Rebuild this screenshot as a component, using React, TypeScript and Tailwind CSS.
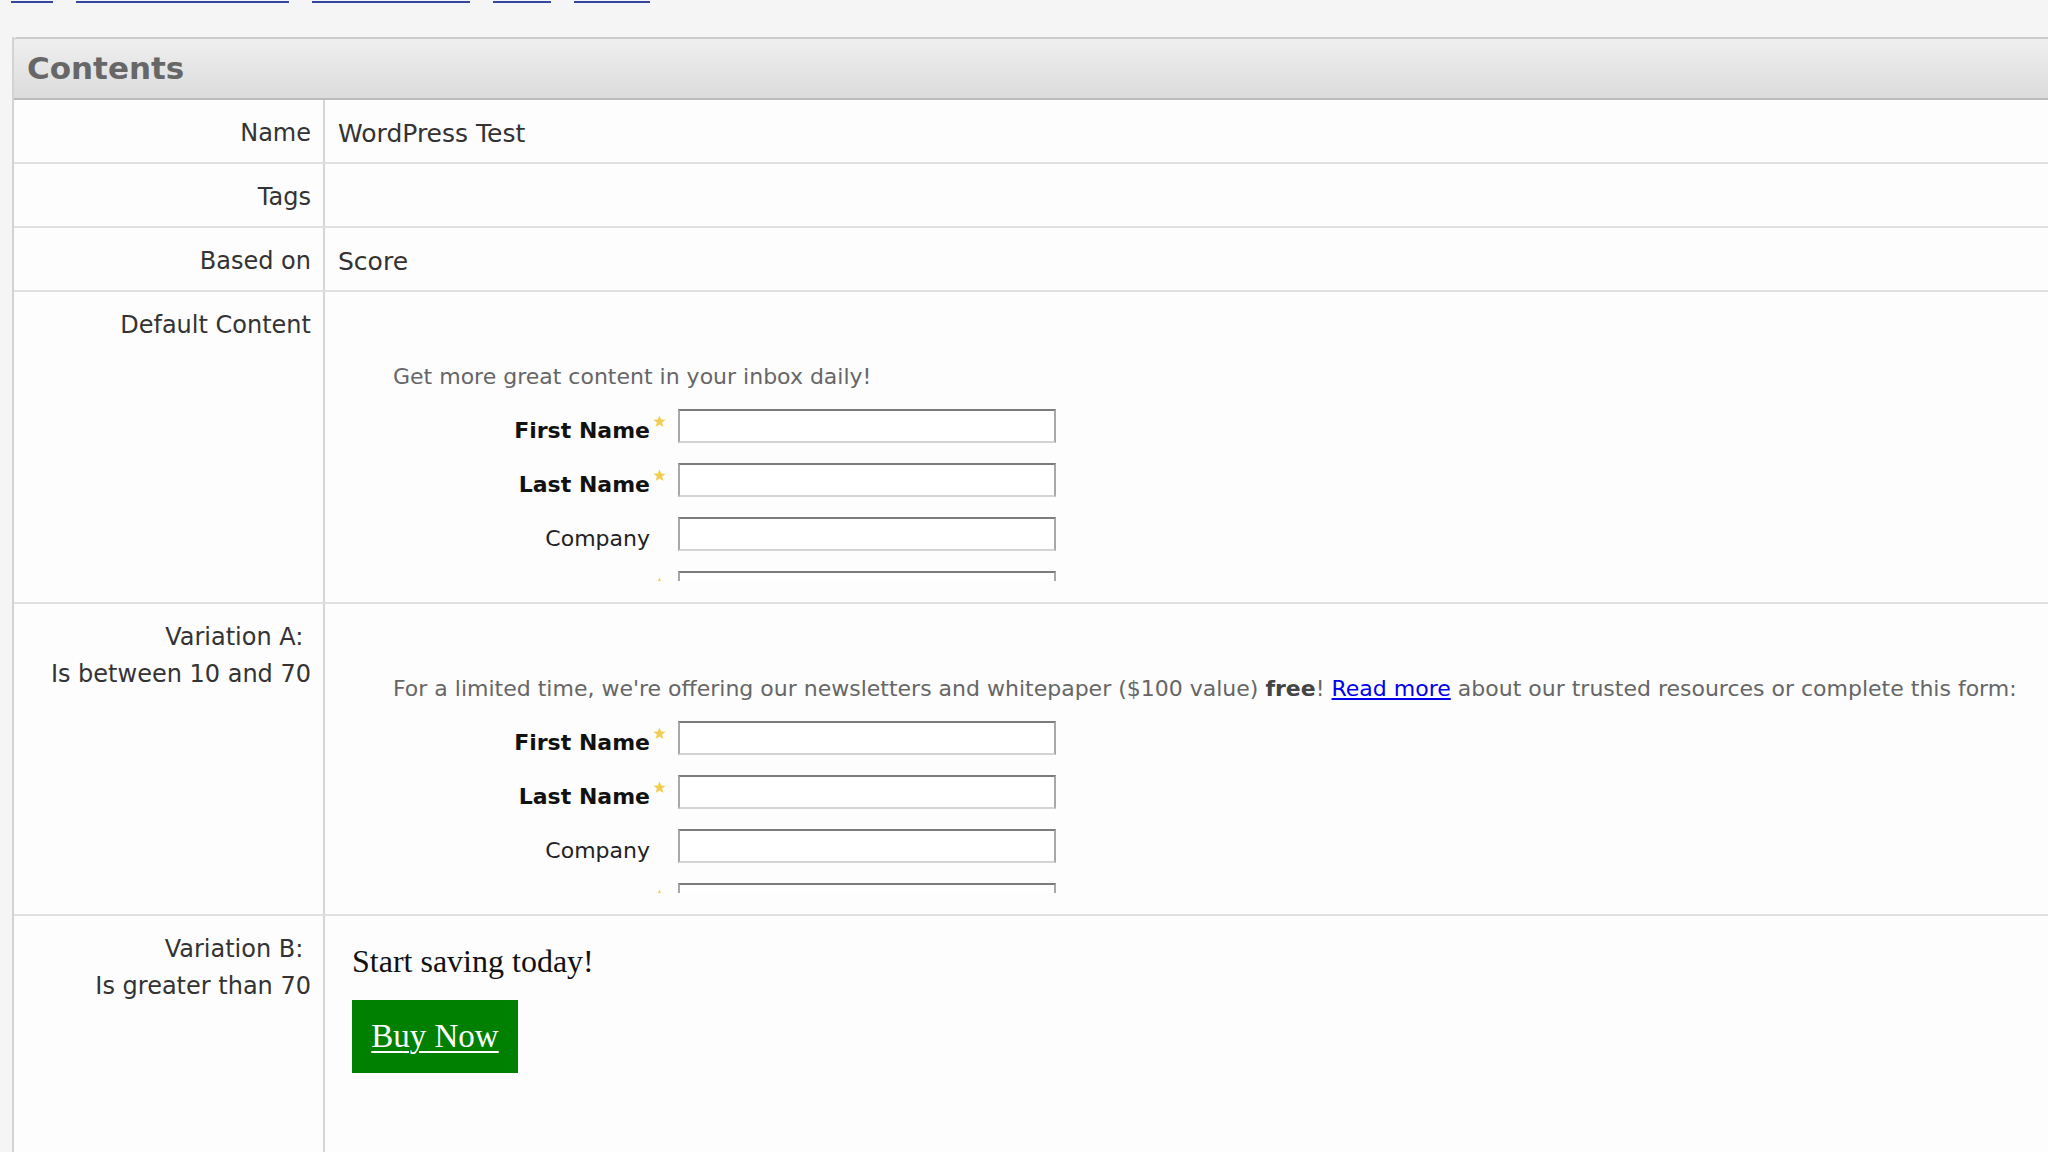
import React from 'react';

const ui = "font-['DejaVu_Sans','Verdana',sans-serif]";
const serif = "font-['Liberation_Serif','Times_New_Roman',serif]";

const topLinks = [
  { text: 'Edit', w: 'w-[42px]' },
  { text: 'Edit Configuration', w: 'w-[213px]' },
  { text: 'Change Type', w: 'w-[158px]' },
  { text: 'Copy', w: 'w-[58px]' },
  { text: 'Delete', w: 'w-[76px]' },
];

function Star() {
  return (
    <svg width="13" height="13" viewBox="0 0 10 10" className="block">
      <path d="M5 0.3 L6.3 3.5 L9.7 3.6 L7 5.8 L8 9.3 L5 7.3 L2 9.3 L3 5.8 L0.3 3.6 L3.7 3.5 Z" fill="#f2cd52" />
    </svg>
  );
}

function FormRow({ label, required }: { label: string; required?: boolean }) {
  return (
    <div className="flex h-[34px]">
      <div
        className={`w-[257px] shrink-0 pt-[9px] text-right text-[22px] leading-[26px] whitespace-nowrap ${
          required ? 'font-bold text-[#111]' : 'text-[#222]'
        }`}
      >
        {label}
      </div>
      <div className="w-[28px] shrink-0 pl-[3px] pt-[6px]">{required && <Star />}</div>
      <div className="w-[378px] h-[34px] shrink-0 border-2 border-t-[#7c7c7c] border-l-[#a8a8a8] border-r-[#a8a8a8] border-b-[#d4d4d4] bg-white" />
    </div>
  );
}

function EmbeddedForm({ intro }: { intro: React.ReactNode }) {
  return (
    <div className="h-[276px] overflow-hidden pl-[55px] pt-[57px]">
      <div className="text-[22px] leading-[30px] text-[#666] whitespace-nowrap">{intro}</div>
      <div className="mt-[17px] flex flex-col gap-[20px]">
        <FormRow label="First Name" required />
        <FormRow label="Last Name" required />
        <FormRow label="Company" />
        <FormRow label="Email" required />
      </div>
    </div>
  );
}

function Row({
  label,
  children,
  className = '',
  last,
}: {
  label: React.ReactNode;
  children?: React.ReactNode;
  className?: string;
  last?: boolean;
}) {
  return (
    <div className={`flex ${last ? '' : 'border-b-2 border-[#e1e1e1]'} ${className}`}>
      <div className="w-[311px] shrink-0 border-r-2 border-[#d5d5d5] pr-[12px] pt-[15px] pb-[10px] text-right text-[24px] leading-[37px] text-[#333]">
        {label}
      </div>
      <div className="flex-1 min-w-0">{children}</div>
    </div>
  );
}

export default function App() {
  return (
    <div className={`h-screen w-full overflow-hidden bg-[#f5f5f5] ${ui}`}>
      <div className="h-[37px] overflow-hidden">
        <div className="-mt-[28px] flex gap-[23px] pl-[11px]">
          {topLinks.map((l) => (
            <span
              key={l.text}
              className={`${l.w} block overflow-hidden whitespace-nowrap border-b-2 border-[#34469f] text-[24px] leading-[29px] text-[#34469f]`}
            >
              {l.text}
            </span>
          ))}
        </div>
      </div>

      <div className="ml-[12px] flex h-[1115px] flex-col border-l-2 border-[#d3d3d3] bg-[#fdfdfd]">
        <div className="flex h-[63px] shrink-0 items-center rounded-tl-[3px] border-t-2 border-b-2 border-t-[#cbcbcb] border-b-[#bcbcbc] bg-gradient-to-b from-[#efefef] to-[#dcdcdc] pl-[13px]">
          <h2 className="text-[31px] font-bold text-[#676767]">Contents</h2>
        </div>

        <Row label="Name">
          <div className="pl-[13px] pt-[15px] text-[25px] leading-[37px] text-[#333]">WordPress Test</div>
        </Row>
        <Row label="Tags" />
        <Row label="Based on">
          <div className="pl-[13px] pt-[15px] text-[25px] leading-[37px] text-[#333]">Score</div>
        </Row>
        <Row label="Default Content" className="h-[312px] shrink-0">
          <div className="pl-[13px] pt-[13px]">
            <EmbeddedForm intro="Get more great content in your inbox daily!" />
          </div>
        </Row>
        <Row
          label={
            <>
              Variation A:&nbsp;
              <br />
              Is between 10 and 70
            </>
          }
          className="h-[312px] shrink-0"
        >
          <div className="pl-[13px] pt-[13px]">
            <EmbeddedForm
              intro={
                <>
                  For a limited time, we're offering our newsletters and whitepaper ($100 value){' '}
                  <b className="text-[#444]">free</b>!{' '}
                  <a href="#" className="text-[#0000ee] underline">
                    Read more
                  </a>{' '}
                  about our trusted resources or complete this form:
                </>
              }
            />
          </div>
        </Row>
        <Row
          label={
            <>
              Variation B:&nbsp;
              <br />
              Is greater than 70
            </>
          }
          className="flex-1"
          last
        >
          <div className={`pl-[27px] pt-[27px] ${serif}`}>
            <div className="text-[32px] leading-[36px] text-[#111]">Start saving today!</div>
            <a
              href="#"
              className="mt-[21px] flex h-[73px] w-[166px] items-center justify-center bg-[#008000] text-[33px] text-white underline decoration-2 underline-offset-[4px]"
            >
              Buy Now
            </a>
          </div>
        </Row>
      </div>
    </div>
  );
}
